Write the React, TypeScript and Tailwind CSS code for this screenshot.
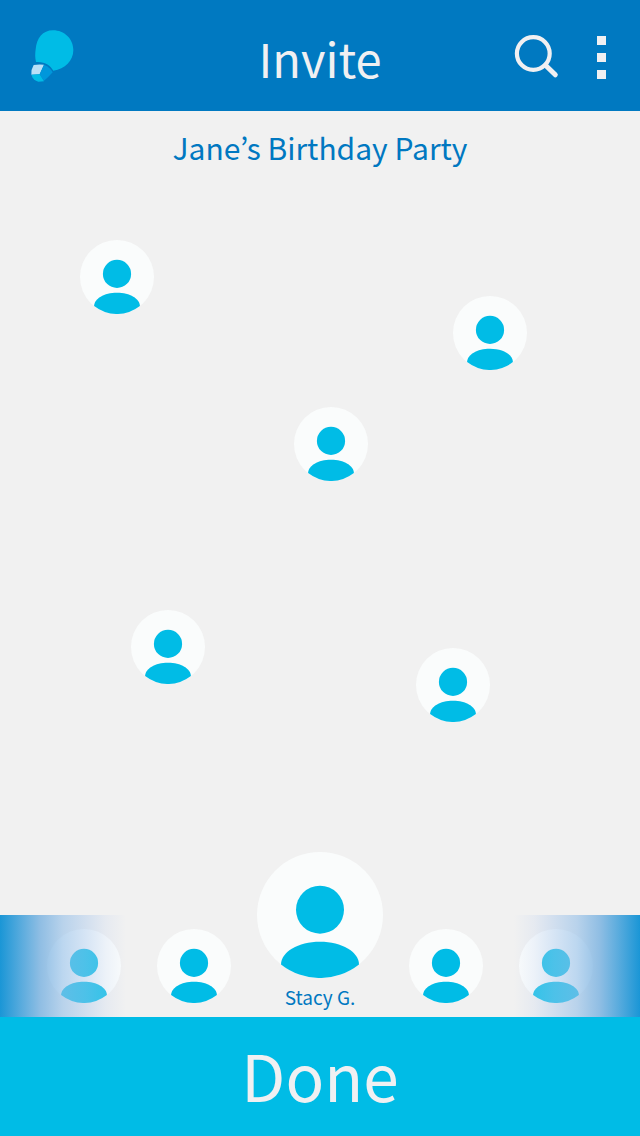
import React from "react";

function Avatar({ className = "" }: { className?: string }) {
  return (
    <svg viewBox="0 0 126 126" className={`block ${className}`} aria-hidden="true">
      <circle cx="63" cy="63" r="63" fill="#fafcfc" />
      <circle cx="63" cy="57.7" r="24" fill="#00bce6" />
      <path
        d="M24 112.5C24 100 41 89.8 63 89.8S102 100 102 112.5A63 63 0 0 1 24 112.5Z"
        fill="#00bce6"
      />
    </svg>
  );
}

function Logo() {
  return (
    <svg viewBox="0 0 129 156" className="block h-[52px] w-[43px]" aria-hidden="true">
      <path
        d="M66 1C100 1 127 27 127 60C127 92 102 118 67 122C58 106 42 94 15 96C12 83 12 72 14 58C17 24 35 1 66 1Z"
        fill="#00bce6"
      />
      <path d="M8 105Q22 102 39 104L26 133L1 134Q0 118 8 105Z" fill="#b9e0f7" />
      <path d="M39 104C52 109 60 117 65 127Q53 141 39 152L26 133Z" fill="#0097db" />
      <path d="M1 134L26 133L39 154L22 155C12 152 5 146 1 134Z" fill="#00bce6" />
    </svg>
  );
}

const guests = [
  { name: "Guest 1", place: "left-[12.5%] top-[10.1%]" },
  { name: "Guest 2", place: "left-[70.8%] top-[18.4%]" },
  { name: "Guest 3", place: "left-[45.9%] top-[34.7%]" },
  { name: "Guest 4", place: "left-[20.5%] top-[64.5%]" },
  { name: "Guest 5", place: "left-[65%] top-[70%]" },
];

export default function App() {
  return (
    <div className="flex min-h-screen flex-col bg-[#f1f1f1] font-['Noto_Sans_CJK_KR','Noto_Sans',sans-serif] text-[#0078c1]">
      <header className="grid h-[111px] grid-cols-3 items-center bg-[#0079c1] px-[31px] text-[#f0f0f2]">
        <a href="#home" aria-label="Home" className="justify-self-start">
          <Logo />
        </a>
        <h1 className="justify-self-center pt-1 text-[47px] leading-none font-normal">Invite</h1>
        <div className="flex items-center gap-[35px] justify-self-end pt-1">
          <button type="button" aria-label="Search">
            <svg viewBox="0 0 44 44" className="block size-11 overflow-visible" fill="none" stroke="currentColor" aria-hidden="true">
              <circle cx="18.3" cy="17.5" r="16.4" strokeWidth="4.2" />
              <path d="M30.5 29.3L40.3 38.8" strokeWidth="5" strokeLinecap="round" />
            </svg>
          </button>
          <button type="button" aria-label="More options" className="flex flex-col gap-2 px-[3px]">
            <span className="size-[9px] bg-current" />
            <span className="size-[9px] bg-current" />
            <span className="size-[9px] bg-current" />
          </button>
        </div>
      </header>

      <main className="flex flex-1 flex-col">
        <h2 className="pt-3 text-center text-[30px] leading-[48px]">Jane’s Birthday Party</h2>
        <div className="relative flex-1">
          {guests.map((guest) => (
            <button
              key={guest.name}
              type="button"
              aria-label={guest.name}
              className={`absolute ${guest.place}`}
            >
              <Avatar className="size-[74px]" />
            </button>
          ))}
        </div>
      </main>

      <nav aria-label="Contacts" className="relative flex items-end justify-center">
        <div className="flex gap-9 pb-3.5">
          <button type="button" aria-label="Contact 1"><Avatar className="size-[74px]" /></button>
          <button type="button" aria-label="Contact 2"><Avatar className="size-[74px]" /></button>
        </div>
        <button type="button" className="mx-[26px] flex flex-col items-center">
          <Avatar className="size-[126px]" />
          <span className="pb-0.5 text-[19px] leading-[37px]">Stacy G.</span>
        </button>
        <div className="flex gap-9 pb-3.5">
          <button type="button" aria-label="Contact 4"><Avatar className="size-[74px]" /></button>
          <button type="button" aria-label="Contact 5"><Avatar className="size-[74px]" /></button>
        </div>
        <div className="pointer-events-none absolute bottom-0 left-0 h-[102px] w-[126px] bg-[linear-gradient(to_right,#1a96d6_0%,rgba(85,169,221,0.95)_18%,rgba(125,180,225,0.84)_32%,rgba(150,192,232,0.62)_50%,rgba(170,200,236,0.45)_68%,rgba(200,215,240,0.27)_84%,rgba(240,240,240,0)_100%)]" />
        <div className="pointer-events-none absolute right-0 bottom-0 h-[102px] w-[126px] bg-[linear-gradient(to_left,#1a96d6_0%,rgba(85,169,221,0.95)_18%,rgba(125,180,225,0.84)_32%,rgba(150,192,232,0.62)_50%,rgba(170,200,236,0.45)_68%,rgba(200,215,240,0.27)_84%,rgba(240,240,240,0)_100%)]" />
      </nav>

      <button
        type="button"
        className="flex h-[119px] w-full items-center justify-center bg-[#00bce6] pb-1.5 text-[64px] leading-none font-normal text-[#f0f0f2]"
      >
        Done
      </button>
    </div>
  );
}
